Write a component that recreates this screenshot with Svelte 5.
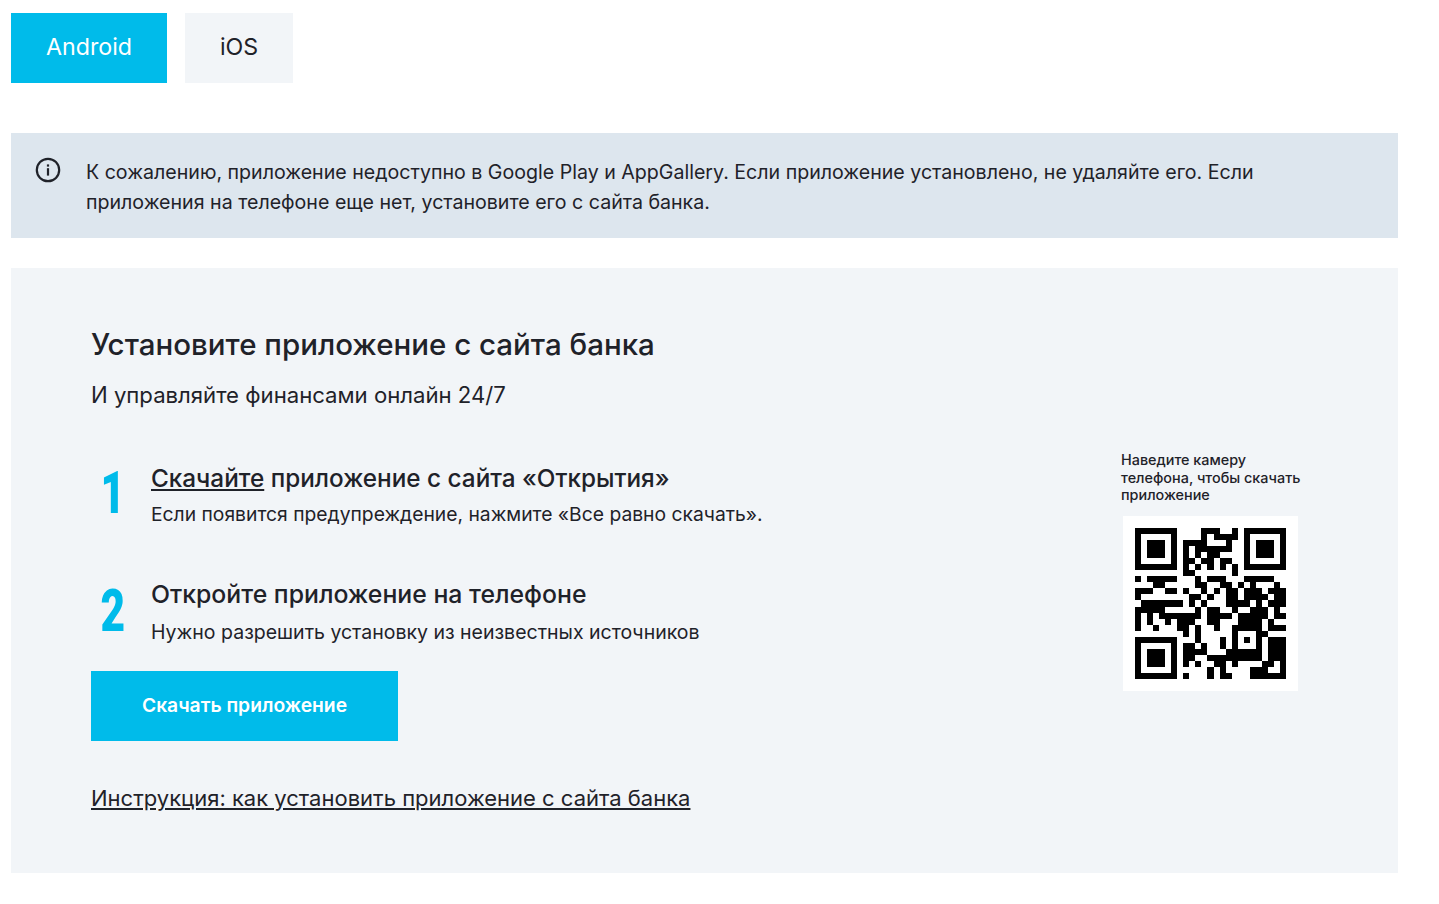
<script>
  const tabs = ['Android', 'iOS'];
  let active = $state('Android');

  const steps = [
    { n: 1, lead: 'Скачайте', title: ' приложение с сайта «Открытия»', text: 'Если появится предупреждение, нажмите «Все равно скачать».' },
    { n: 2, lead: '', title: 'Откройте приложение на телефоне', text: 'Нужно разрешить установку из неизвестных источников' },
  ];

  // 25x25 modules, read off the reference
  const qr = [
    '#######....###..#.#######',
    '#.....#....#.####.#.....#',
    '#.###.#.####...#..#.###.#',
    '#.###.#.#.######..#.###.#',
    '#.###.#.#.#.##....#.###.#',
    '#.....#.##.##.##..#.....#',
    '#######.#.#.#.#.#.#######',
    '........##......#........',
    '#.#####...#.###...#####..',
    '...##.....##..##.#.#...#.',
    '###..##.#..#.#.##.###.###',
    '#........##.#..##.####.##',
    '.#######.#.#...####.#.###',
    '#####.....#.##..#..###.#.',
    '#.#.#######.####.#####.##',
    '#.#..#.###..##...####.#..',
    '#..#...##.#..#..#####.###',
    '........#.#.....#...##...',
    '#######...#...#.#.#.#.###',
    '#.....#.##.#..#.#...#.###',
    '#.###.#.####...######.###',
    '#.###.#.##..#########.###',
    '#.###.#.#.#..##.#....##.#',
    '#.....#.....#.#....###..#',
    '#######.#...#.##...######',
  ];
  const cells = qr.flatMap((row, y) =>
    [...row].map((c, x) => (c === '#' ? `M${x} ${y}h1v1h-1z` : '')),
  ).join('');
</script>

<main class="page">
  <div class="tabs">
    {#each tabs as t}
      <button class="tab" class:active={active === t} onclick={() => (active = t)}>{t}</button>
    {/each}
  </div>

  <div class="notice">
    <svg class="info" viewBox="0 0 26 26" width="26" height="26" aria-hidden="true">
      <circle cx="13" cy="13" r="11.2" fill="none" stroke="#1f2229" stroke-width="2.2" />
      <rect x="11.9" y="11.2" width="2.2" height="7.4" fill="#1f2229" />
      <rect x="11.9" y="7.4" width="2.2" height="2.2" fill="#1f2229" />
    </svg>
    <p>К сожалению, приложение недоступно в Google Play и AppGallery. Если приложение установлено, не удаляйте его. Если приложения на телефоне еще нет, установите его с сайта банка.</p>
  </div>

  <section class="card">
    <div class="main">
      <h2>Установите приложение с сайта банка</h2>
      <p class="lead">И управляйте финансами онлайн 24/7</p>

      {#each steps as s}
        <div class="step">
          <span class="num">{s.n}</span>
          <div>
            <h3>{#if s.lead}<a href="#top">{s.lead}</a>{/if}{s.title}</h3>
            <p>{s.text}</p>
          </div>
        </div>
      {/each}

      <button class="download">Скачать приложение</button>
      <a class="guide" href="#top">Инструкция: как установить приложение с сайта банка</a>
    </div>

    <aside class="scan">
      <p>Наведите камеру телефона, чтобы скачать приложение</p>
      <div class="qr">
        <svg viewBox="0 0 25 25" width="151" height="151" shape-rendering="crispEdges" aria-label="QR-код">
          <path d={cells} fill="#000" />
        </svg>
      </div>
    </aside>
  </section>
</main>

<style>
  :global(body) {
    background: #fff;
  }
  .page {
    width: 1387px;
    padding: 13px 0 31px 11px;
    font-family: Inter, "Noto Sans", sans-serif;
    color: #1f2229;
  }
  p, h2, h3 {
    margin: 0;
  }
  .tabs {
    display: flex;
    gap: 18px;
    margin-bottom: 50px;
  }
  .tab {
    width: 108px;
    height: 70px;
    padding: 0 0 2px;
    border: 0;
    background: #f2f5f8;
    color: #1f2229;
    font: 400 23.2px Inter, sans-serif;
    cursor: pointer;
  }
  .tab:first-child {
    width: 156px;
  }
  .tab.active {
    background: #00bbea;
    color: #fff;
  }
  .notice {
    display: flex;
    gap: 25px;
    padding: 24px 100px 21px 24px;
    background: #dde6ee;
    margin-bottom: 30px;
    font-size: 19.6px;
    line-height: 30px;
  }
  .info {
    flex: none;
  }
  .card {
    display: flex;
    justify-content: space-between;
    padding: 58px 92px 61px 80px;
    background: #f2f5f8;
  }
  h2 {
    font-size: 29.5px;
    font-weight: 500;
    line-height: 36px;
  }
  .lead {
    margin-top: 19px;
    font-size: 22.15px;
    line-height: 28px;
    margin-bottom: 54px;
  }
  .step {
    display: flex;
    height: 90px;
  }
  .step + .step {
    height: 92px;
    margin-top: 26px;
  }
  .num {
    width: 60px;
    flex: none;
    color: #00bbea;
    font: 900 59px/70px Roboto, sans-serif;
    transform: scaleX(.72) translateY(-5px);
    transform-origin: 21px 0;
    text-align: center;
    padding-right: 16px;
    box-sizing: border-box;
  }
  .step + .step .num {
    margin-top: 2px;
  }
  h3 {
    font-size: 24.3px;
    font-weight: 500;
    line-height: 30px;
  }
  .step + .step h3 {
    font-size: 24.8px;
  }
  h3 a, .guide {
    color: inherit;
    text-decoration: underline;
  }
  .step p {
    margin-top: 7px;
    font-size: 19.3px;
    line-height: 28px;
  }
  .step + .step p {
    margin-top: 9px;
    font-size: 19.5px;
  }
  .download {
    display: block;
    width: 307px;
    height: 70px;
    padding: 0 0 3px;
    border: 0;
    background: #00bbea;
    color: #fff;
    font: 600 19.3px Inter, sans-serif;
    cursor: pointer;
  }
  .guide {
    display: block;
    margin-top: 43px;
    font-size: 22px;
    line-height: 28px;
  }
  .scan {
    width: 185px;
    margin-top: 125px;
    font-size: 14.4px;
    font-weight: 500;
    line-height: 17.5px;
  }
  .qr {
    width: 175px;
    height: 175px;
    margin: 12px 0 0 2px;
    background: #fff;
    display: flex;
    align-items: center;
    justify-content: center;
  }
</style>
